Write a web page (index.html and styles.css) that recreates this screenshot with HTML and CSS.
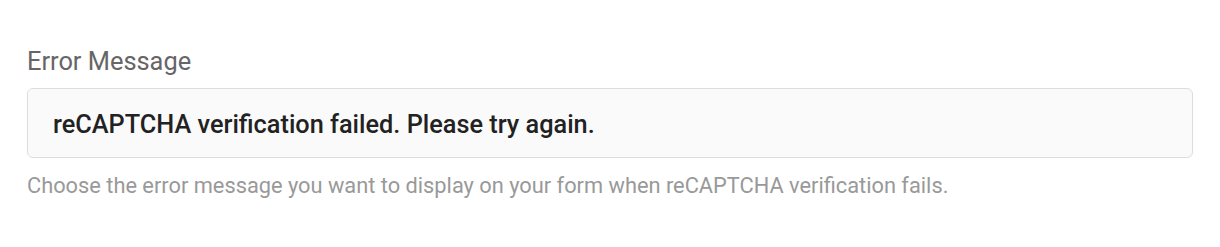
FILE: index.html
```html
<!DOCTYPE html>
<html>
<head>
<meta charset="utf-8">
<link rel="stylesheet" href="styles.css">
</head>
<body>
<div class="field">
  <label class="field-label" for="err">Error Message</label>
  <input class="field-input" id="err" type="text" value="reCAPTCHA verification failed. Please try again.">
  <p class="field-help">Choose the error message you want to display on your form when reCAPTCHA verification fails.</p>
</div>
</body>
</html>
```
FILE: styles.css
```css
html, body {
  margin: 0;
  background: #ffffff;
}
body {
  font-family: Roboto, "Liberation Sans", sans-serif;
  padding: 45px 27px 0 27px;
}
.field {
  display: flex;
  flex-direction: column;
}
.field-label {
  font-size: 25.4px;
  color: #666666;
  line-height: 32px;
  margin-bottom: 11px;
}
.field-input {
  box-sizing: border-box;
  width: 1166px;
  height: 70px;
  border: 1px solid #dddddd;
  border-radius: 6px;
  background: #fafafa;
  padding: 2px 25px 0 25px;
  font-family: Roboto, "Liberation Sans", sans-serif;
  font-size: 25.3px;
  font-weight: 500;
  color: #222222;
  outline: none;
}
.field-help {
  margin: 16px 0 0 0;
  font-size: 21.8px;
  line-height: 24px;
  color: #999999;
}
```
